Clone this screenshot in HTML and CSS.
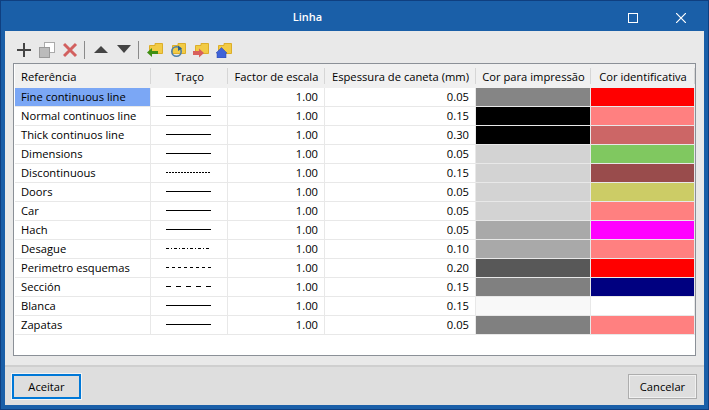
FILE: index.html
```html
<!DOCTYPE html>
<html lang="pt">
<head>
    <meta charset="UTF-8">
    <title>Linha</title>
    <link rel="stylesheet" href="styles.css">
</head>
<body>
    <div class="window">
        <div class="titlebar">
            <span class="title">Linha</span>
            <div class="window-buttons">
                <svg width="10" height="10" viewBox="0 0 10 10"><rect x=".5" y=".5" width="9" height="9" fill="none" stroke="#fff"/></svg>
                <svg width="10" height="10" viewBox="0 0 10 10"><path d="M0 0L10 10M10 0L0 10" stroke="#fff" stroke-width="1.2"/></svg>
            </div>
        </div>

        <div class="content">
            <div class="toolbar">
                <svg width="17" height="16" viewBox="0 0 17 16"><path d="M8 1V15M1 8H15" stroke="#444" stroke-width="2"/></svg>
                <svg width="18" height="16" viewBox="0 0 18 16"><rect x="5.500" y=".5" width="10" height="10" fill="#fff" stroke="#aaa"/><rect x=".5" y="5.500" width="10" height="10" fill="#bbb" stroke="#999"/></svg>
                <svg width="15" height="16" viewBox="0 0 15 16"><path d="M1 2L13 14M13 2L1 14" stroke="#d2605f" stroke-width="3"/></svg>
                <span class="tool-sep"></span>
                <svg width="20" height="16" viewBox="0 0 20 16"><path d="M3 11L10 4L17 11Z" fill="#444"/></svg>
                <svg width="15" height="16" viewBox="0 0 15 16"><path d="M0 3H14L7 11Z" fill="#444"/></svg>
                <span class="tool-sep"></span>
                <svg width="19" height="16" viewBox="0 0 19 16"><path d="M4.500 3.500H10V1.500H17.500V11.500H4.500Z" fill="#f2cb45" stroke="#dcae2a"/><path d="M2 10.500L7 6V9H13V12H7V15Z" fill="#3f8f12"/></svg>
                <svg width="17" height="16" viewBox="0 0 17 16"><path d="M2.500 3.500H8V1.500H15.500V11.500H2.500Z" fill="#f2cb45" stroke="#dcae2a"/><circle cx="6.500" cy="9.500" r="4.700" fill="none" stroke="#4c7fa6" stroke-width="1.600"/><path d="M8 3.500L12 6.500L8 9Z" fill="#2a5f8a"/></svg>
                <svg width="17" height="16" viewBox="0 0 17 16"><path d="M2.500 3.500H8V1.500H15.500V11.500H2.500Z" fill="#f2cb45" stroke="#dcae2a"/><path d="M11 11L6 6.500V9H0V13H6V15.500Z" fill="#d9605c"/></svg>
                <svg width="17" height="16" viewBox="0 0 17 16"><path d="M2.500 3.500H8V1.500H15.500V11.500H2.500Z" fill="#f2cb45" stroke="#dcae2a"/><path d="M0 11L5.500 5.500L11 11H10V16H1V11Z" fill="#3f63d8" stroke="#2a45a8" stroke-width=".5"/></svg>
            </div>

            <div class="table-box">
                <table class="line-table">
                    <colgroup>
                        <col class="col-ref">
                        <col class="col-line">
                        <col class="col-scale">
                        <col class="col-pen">
                        <col class="col-print">
                        <col class="col-id">
                    </colgroup>
                    <thead>
                        <tr>
                            <th class="left">Referência</th>
                            <th>Traço</th>
                            <th>Factor de escala</th>
                            <th>Espessura de caneta (mm)</th>
                            <th>Cor para impressão</th>
                            <th>Cor identificativa</th>
                        </tr>
                    </thead>
                    <tbody id="rows"></tbody>
                </table>
            </div>
        </div>

        <div class="footer">
            <button class="btn btn-default">Aceitar</button>
            <button class="btn">Cancelar</button>
        </div>
    </div>

    <script>
        // name, dash pattern, scale, pen, print colour, id colour
        const lines = [
            ['Fine continuous line', '', '1.00', '0.05', '#858585', '#ff0000'],
            ['Normal continuos line', '', '1.00', '0.15', '#000000', '#ff8080'],
            ['Thick continuos line', '', '1.00', '0.30', '#000000', '#cc6666'],
            ['Dimensions', '', '1.00', '0.05', '#d3d3d3', '#80c860'],
            ['Discontinuous', '2 1', '1.00', '0.15', '#d3d3d3', '#994c4c'],
            ['Doors', '', '1.00', '0.05', '#d3d3d3', '#cccc66'],
            ['Car', '', '1.00', '0.05', '#d3d3d3', '#ff8080'],
            ['Hach', '', '1.00', '0.05', '#a9a9a9', '#ff00ff'],
            ['Desague', '3 2 1 2', '1.00', '0.10', '#a9a9a9', '#ff8080'],
            ['Perimetro esquemas', '3 3', '1.00', '0.20', '#585858', '#ff0000'],
            ['Sección', '5 5', '1.00', '0.15', '#808080', '#000080'],
            ['Blanca', '', '1.00', '0.15', '#f8f8f8', '#ffffff'],
            ['Zapatas', '', '1.00', '0.05', '#808080', '#ff8080']
        ];

        const rows = document.getElementById('rows');
        lines.forEach((line, i) => {
            const tr = document.createElement('tr');
            tr.innerHTML = `
                <td class="left ${i === 0 ? 'selected' : ''}">${line[0]}</td>
                <td class="sample"><svg width="45" height="1"><line x1="0" y1=".5" x2="45" y2=".5" stroke="#000" stroke-dasharray="${line[1]}"/></svg></td>
                <td class="num">${line[2]}</td>
                <td class="num">${line[3]}</td>
                <td class="swatch"><div style="background:${line[4]}"></div></td>
                <td class="swatch"><div style="background:${line[5]}"></div></td>
            `;
            rows.appendChild(tr);
        });
    </script>
</body>
</html>
```
FILE: styles.css
```css
body {
    margin: 0;
    font-family: "Open Sans", sans-serif;
    font-size: 11.2px;
    color: #000;
}

.window {
    width: 709px;
    height: 410px;
    box-sizing: border-box;
    display: flex;
    flex-direction: column;
    background: #1a5fa8;
    border: 1px solid #0f3f80;
    padding: 0 4px 4px;
}

.titlebar {
    height: 30px;
    flex: none;
    box-sizing: border-box;
    display: flex;
    align-items: center;
    justify-content: center;
    padding-right: 94px;
    position: relative;
}

.title {
    color: #fff;
    font-weight: 600;
    font-size: 11px;
}

.window-buttons {
    position: absolute;
    right: 18px;
    top: 12px;
    display: flex;
    gap: 38px;
}

.content {
    flex: 1;
    background: #e9e9e9;
    padding: 0 8px 9px 8px;
    display: flex;
    flex-direction: column;
}

.toolbar {
    height: 32px;
    flex: none;
    box-sizing: border-box;
    display: flex;
    align-items: center;
    padding: 6px 0 0 3px;
    gap: 6px;
}

.toolbar svg {
    flex: none;
}

.tool-sep {
    width: 1px;
    height: 18px;
    background: #8a8a8a;
}

.table-box {
    flex: 1;
    background: #fff;
    border: 1px solid #8b9097;
    padding-left: 1px;
}

.line-table {
    border-collapse: separate;
    border-spacing: 0;
    table-layout: fixed;
    width: 680px;
}

.col-ref { width: 136px; }
.col-line { width: 77px; }
.col-scale { width: 97px; }
.col-pen { width: 151px; }
.col-print { width: 115px; }
.col-id { width: 104px; }

.line-table th {
    height: 24px;
    padding: 0;
    font-weight: 400;
    background: linear-gradient(#d6d6d6, #d6d6d6) right center / 1px 16px no-repeat, #f0f0f0;
}

.line-table td {
    height: 18px;
    padding: 0;
    border-right: 1px solid #e8e8e8;
    border-bottom: 1px solid #e8e8e8;
    line-height: 18px;
    white-space: nowrap;
}

.line-table .left {
    text-align: left;
    padding-left: 6px;
}

.line-table td.selected {
    background: #7ba7f5;
}

.line-table td.num {
    text-align: right;
    padding-right: 6px;
}

.line-table td.sample {
    vertical-align: top;
}

.sample svg {
    display: block;
    margin: 8px 0 0 15px;
}

.line-table td.swatch div {
    height: 18px;
}

.footer {
    height: 40px;
    flex: none;
    box-sizing: border-box;
    background: #dedede;
    border-top: 2px solid #cfcfcf;
    display: flex;
    align-items: center;
    justify-content: space-between;
    padding: 0 7px;
}

.btn {
    width: 69px;
    height: 25px;
    padding: 0;
    font-family: inherit;
    font-size: 11.2px;
    color: #000;
    background: #dedede;
    border: 1px solid #adadad;
    box-shadow: inset 0 0 0 1px #f0f0f0;
}

.btn-default {
    border: 2px solid #0078d7;
    box-shadow: 0 0 0 1px #f4f4f4;
}
```
